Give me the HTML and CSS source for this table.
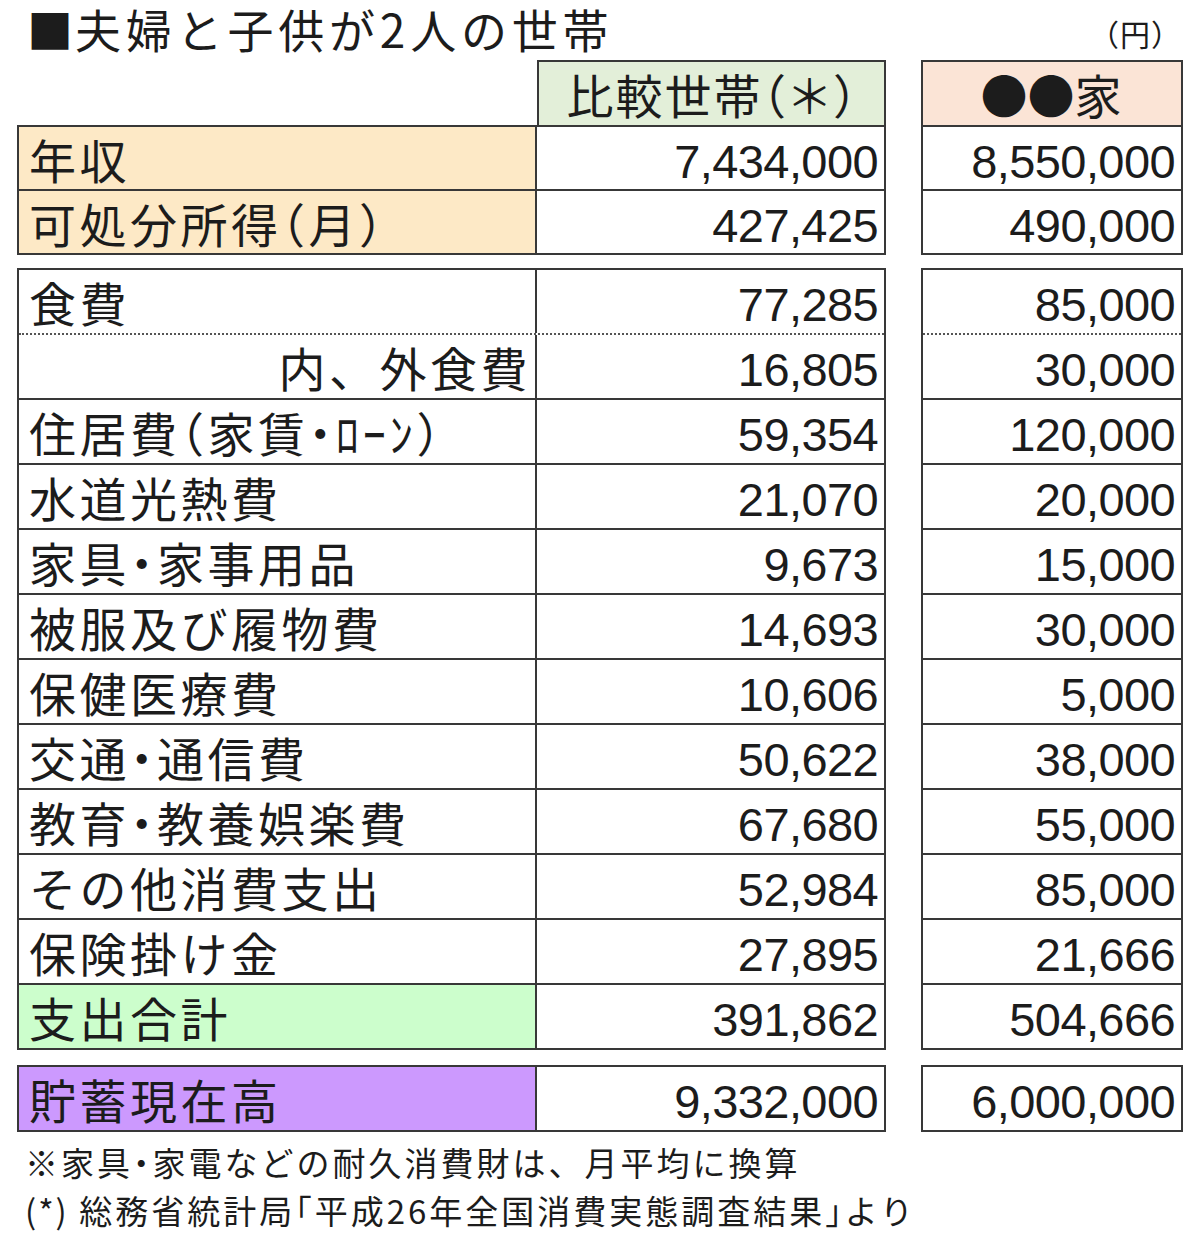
FILE: index.html
```html
<!DOCTYPE html>
<html lang="ja">
<head>
<meta charset="utf-8">
<title>夫婦と子供が2人の世帯</title>
<link rel="stylesheet" href="styles.css">
</head>
<body>
<div class="page">
  <div class="title-row">
    <h1 class="title"><span class="sq">■</span>夫婦と子供が2人の世帯</h1>
    <span class="unit"><span class="p">（</span>円<span class="p">）</span></span>
  </div>

  <div class="block head">
    <div class="left">
      <div class="label-spacer"></div>
      <div class="hcell green">比較世帯<span class="paren"><span class="p">（</span>＊<span class="p">）</span></span></div>
    </div>
    <div class="right">
      <div class="hcell peach"><span class="dots">●●</span>家</div>
    </div>
  </div>

  <div class="block income">
    <div class="left box">
      <div class="row"><div class="label orange">年収</div><div class="num">7,434,000</div></div>
      <div class="row"><div class="label orange">可処分所得<span class="p">（</span>月<span class="p">）</span></div><div class="num">427,425</div></div>
    </div>
    <div class="right box">
      <div class="row"><div class="num">8,550,000</div></div>
      <div class="row"><div class="num">490,000</div></div>
    </div>
  </div>

  <div class="block expense">
    <div class="left box">
      <div class="row dotted"><div class="label">食費</div><div class="num">77,285</div></div>
      <div class="row"><div class="label sub">内、外食費</div><div class="num">16,805</div></div>
      <div class="row"><div class="label">住居費<span class="p">（</span>家賃<span class="p">・</span>ﾛｰﾝ<span class="p">）</span></div><div class="num">59,354</div></div>
      <div class="row"><div class="label">水道光熱費</div><div class="num">21,070</div></div>
      <div class="row"><div class="label">家具<span class="p">・</span>家事用品</div><div class="num">9,673</div></div>
      <div class="row"><div class="label">被服及び履物費</div><div class="num">14,693</div></div>
      <div class="row"><div class="label">保健医療費</div><div class="num">10,606</div></div>
      <div class="row"><div class="label">交通<span class="p">・</span>通信費</div><div class="num">50,622</div></div>
      <div class="row"><div class="label">教育<span class="p">・</span>教養娯楽費</div><div class="num">67,680</div></div>
      <div class="row"><div class="label">その他消費支出</div><div class="num">52,984</div></div>
      <div class="row"><div class="label">保険掛け金</div><div class="num">27,895</div></div>
      <div class="row"><div class="label lime">支出合計</div><div class="num">391,862</div></div>
    </div>
    <div class="right box">
      <div class="row dotted"><div class="num">85,000</div></div>
      <div class="row"><div class="num">30,000</div></div>
      <div class="row"><div class="num">120,000</div></div>
      <div class="row"><div class="num">20,000</div></div>
      <div class="row"><div class="num">15,000</div></div>
      <div class="row"><div class="num">30,000</div></div>
      <div class="row"><div class="num">5,000</div></div>
      <div class="row"><div class="num">38,000</div></div>
      <div class="row"><div class="num">55,000</div></div>
      <div class="row"><div class="num">85,000</div></div>
      <div class="row"><div class="num">21,666</div></div>
      <div class="row"><div class="num">504,666</div></div>
    </div>
  </div>

  <div class="block savings">
    <div class="left box">
      <div class="row"><div class="label purple">貯蓄現在高</div><div class="num">9,332,000</div></div>
    </div>
    <div class="right box">
      <div class="row"><div class="num">6,000,000</div></div>
    </div>
  </div>

  <div class="notes">
    <p class="note">※家具<span class="p">・</span>家電などの耐久消費財は、月平均に換算</p>
    <p class="note"><span class="ast">(*)</span> 総務省統計局<span class="p">「</span>平成26年全国消費実態調査結果<span class="p">」</span>より</p>
  </div>
</div>
</body>
</html>
```

FILE: styles.css
```css
* { box-sizing: border-box; }

html, body {
  margin: 0;
  padding: 0;
  background: #ffffff;
}

body {
  font-family: "Noto Sans CJK JP", "Noto Sans", sans-serif;
  color: #1c1c1c;
}

.page {
  width: 1200px;
  padding-left: 17px;
}

/* half-width punctuation */
.p {
  font-feature-settings: "halt" 1;
}

/* title */
.title-row {
  display: flex;
  justify-content: space-between;
  align-items: flex-start;
  height: 60px;
  width: 1166px;
}

.title {
  margin: 0;
  padding-left: 10px;
  font-size: 46px;
  font-weight: 400;
  line-height: 60px;
  letter-spacing: 4.8px;
  margin-top: -2px;
}

.sq {
  letter-spacing: 2px;
}

.unit {
  font-size: 30px;
  line-height: 32px;
  margin-top: 17px;
  padding-right: 16px;
  letter-spacing: 1px;
}

/* blocks */
.block {
  display: flex;
  gap: 35px;
}

.left { width: 869px; }
.right { width: 262px; }

.box {
  border: 2px solid #383838;
  border-bottom: none;
}

.head .left {
  display: flex;
}

.label-spacer { width: 520px; }

.hcell {
  flex: 1;
  height: 65px;
  border: 2px solid #383838;
  border-bottom: none;
  font-size: 47px;
  line-height: 63px;
  text-align: center;
  letter-spacing: 2px;
}

.head .right .hcell { width: 262px; }

.paren {
  letter-spacing: 0;
}

.green { background: #e3efd9; }
.peach { background: #fbe4d6; }

.dots {
  letter-spacing: 0;
}

.income .row { height: 64px; }

.expense { margin-top: 13px; }
.savings { margin-top: 15px; }

.row {
  display: flex;
  height: 65px;
  border-bottom: 2px solid #383838;
}

.row.dotted {
  border-bottom: 2px dotted #555555;
}

.label {
  width: 518px;
  flex: none;
  border-right: 2px solid #383838;
  font-size: 47px;
  line-height: 63px;
  padding-left: 10px;
  padding-top: 0;
  letter-spacing: 3.5px;
  white-space: nowrap;
}

.label.sub {
  text-align: right;
  padding-right: 4px;
  padding-left: 0;
}

.orange { background: #fde9c6; }
.lime { background: #ccfecc; }
.purple { background: #cc99fe; }

.num {
  flex: 1;
  font-family: "Liberation Sans", Arial, sans-serif;
  font-size: 47px;
  line-height: 63px;
  padding-top: 3px;
  padding-right: 6px;
  text-align: right;
  letter-spacing: -0.6px;
}

/* notes */
.notes {
  padding-left: 8px;
  margin-top: 6px;
}

.note {
  margin: 0;
  font-size: 33px;
  line-height: 48px;
  letter-spacing: 3px;
  white-space: nowrap;
}

.ast {
  letter-spacing: 2px;
}
```
